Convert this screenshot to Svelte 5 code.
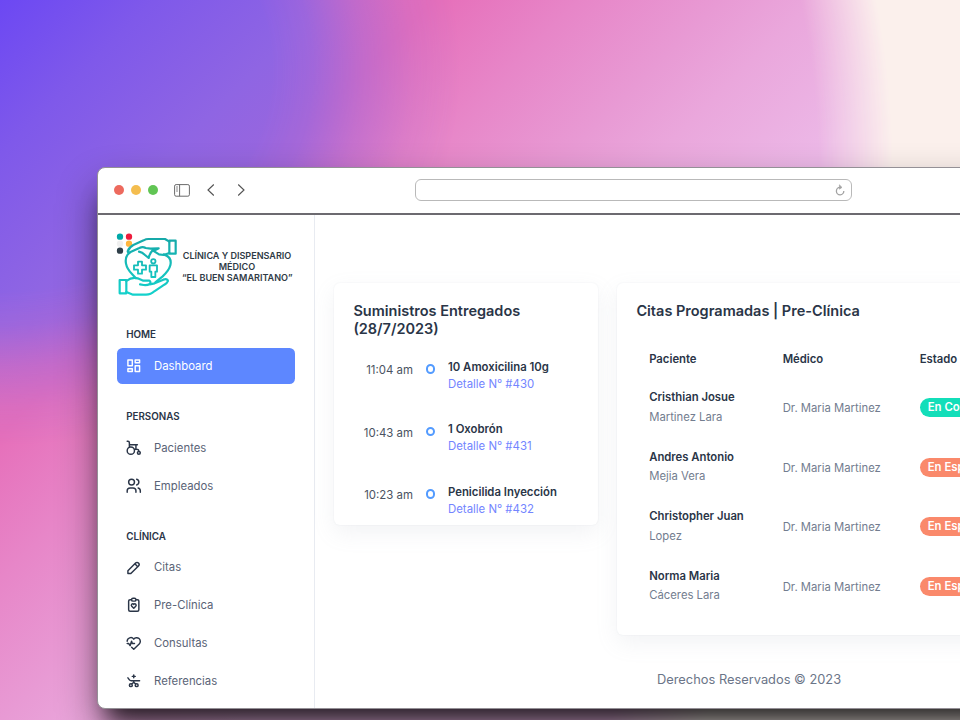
<script>
  const groups = [
    { title: 'HOME', items: [{ label: 'Dashboard', icon: 'dashboard', active: true }] },
    {
      title: 'PERSONAS',
      items: [
        { label: 'Pacientes', icon: 'wheelchair' },
        { label: 'Empleados', icon: 'users' }
      ]
    },
    {
      title: 'CLÍNICA',
      items: [
        { label: 'Citas', icon: 'pencil' },
        { label: 'Pre-Clínica', icon: 'clipboard' },
        { label: 'Consultas', icon: 'heartbeat' },
        { label: 'Referencias', icon: 'bed' }
      ]
    }
  ];

  const icons = {
    dashboard: 'M4 4h6v8h-6z M4 16h6v4h-6z M14 12h6v8h-6z M14 4h6v4h-6z',
    wheelchair:
      'M3 16a5 5 0 1 0 10 0a5 5 0 1 0 -10 0 M17 19a2 2 0 1 0 4 0a2 2 0 1 0 -4 0 M19 17a3 3 0 0 0 -3 -3h-3.4 M3 3h1a2 2 0 0 1 2 2v6 M6 8h11 M15 8v6',
    users:
      'M5 7a4 4 0 1 0 8 0a4 4 0 1 0 -8 0 M3 21v-2a4 4 0 0 1 4 -4h4a4 4 0 0 1 4 4v2 M16 3.13a4 4 0 0 1 0 7.75 M21 21v-2a4 4 0 0 0 -3 -3.85',
    pencil: 'M4 20h4l10.5 -10.5a1.5 1.5 0 0 0 -4 -4l-10.5 10.5v4 M13.5 6.5l4 4',
    clipboard:
      'M9 5h-2a2 2 0 0 0 -2 2v12a2 2 0 0 0 2 2h10a2 2 0 0 0 2 -2v-12a2 2 0 0 0 -2 -2h-2 M9 5a2 2 0 0 1 2 -2h2a2 2 0 0 1 2 2a2 2 0 0 1 -2 2h-2a2 2 0 0 1 -2 -2z M11.993 16.75l2.747 -2.815a1.9 1.9 0 0 0 0 -2.632a1.775 1.775 0 0 0 -2.56 0l-.183 .188l-.183 -.189a1.775 1.775 0 0 0 -2.56 0a1.899 1.899 0 0 0 0 2.632l2.738 2.825z',
    heartbeat:
      'M19.5 13.572l-7.5 7.428l-2.896 -2.868m-6.117 -8.104a5 5 0 0 1 9.013 -3.022a5 5 0 1 1 7.5 6.572 M3 13h2l2 3l2 -6l1 3h3',
    bed: 'M14 18a2 2 0 1 0 4 0a2 2 0 1 0 -4 0 M6 18a2 2 0 1 0 4 0a2 2 0 1 0 -4 0 M4 8l2.1 2.8a3 3 0 0 0 2.4 1.2h11.5 M10 6h4 M12 4v4 M12 12v2l-2.5 2.5 M14.5 16.5l-2.5 -2.5'
  };

  const supplies = [
    { time: '11:04 am', name: '10 Amoxicilina 10g', detail: 'Detalle N° #430' },
    { time: '10:43 am', name: '1 Oxobrón', detail: 'Detalle N° #431' },
    { time: '10:23 am', name: 'Penicilida Inyección', detail: 'Detalle N° #432' }
  ];

  const appointments = [
    { first: 'Cristhian Josue', last: 'Martinez Lara', status: 'En Consulta', tone: 'green' },
    { first: 'Andres Antonio', last: 'Mejia Vera', status: 'En Espera', tone: 'orange' },
    { first: 'Christopher Juan', last: 'Lopez', status: 'En Espera', tone: 'orange' },
    { first: 'Norma Maria', last: 'Cáceres Lara', status: 'En Espera', tone: 'orange' }
  ];
</script>

<div class="scene">
  <div class="cream"></div>
  <div class="violet"></div>
  <div class="window">
    <header class="toolbar">
      <div class="lights"><i class="red"></i><i class="yellow"></i><i class="lime"></i></div>
      <svg class="panel" viewBox="0 0 16 13" fill="none" stroke="#6b6b6b">
        <rect x=".6" y=".6" width="14.8" height="11.6" rx="1.5" />
        <path d="M5.6 .6v11.6" />
        <path d="M2 3h2M2 5h2M2 7h2" stroke-width=".8" />
      </svg>
      <svg class="back" viewBox="0 0 8 12" fill="none" stroke="#555" stroke-width="1.15"><path d="M6.8 .5L1 6l5.8 5.5" /></svg>
      <svg class="forward" viewBox="0 0 8 12" fill="none" stroke="#555" stroke-width="1.15"><path d="M1.2 .5L7 6l-5.8 5.5" /></svg>
      <div class="address">
        <svg viewBox="0 0 10 12" fill="none" stroke="#a2a2a2" stroke-width="1.3">
          <path d="M5 3.4A3.7 3.7 0 1 0 8.8 7" /><path d="M4.4 .8L7 3.4L4.4 5.2z" fill="#a2a2a2" stroke-width=".6" />
        </svg>
      </div>
    </header>

    <div class="body">
      <aside>
        <div class="brand">
          <svg viewBox="0 0 225 225" fill="none" stroke-width="6.6" stroke-linejoin="round" stroke-linecap="round">
            <defs>
              <linearGradient id="teal" x1="0" y1="38" x2="0" y2="212" gradientUnits="userSpaceOnUse">
                <stop offset="0" stop-color="#16a8a8" /><stop offset="1" stop-color="#14d2cc" />
              </linearGradient>
            </defs>
            <g stroke="none">
              <circle cx="30" cy="35" r="9.5" fill="#00a8a8" />
              <circle cx="57" cy="35" r="9.5" fill="#ee1c3c" />
              <circle cx="30" cy="56" r="9.5" fill="#efefef" />
              <circle cx="57" cy="56" r="9.5" fill="#ffb63d" />
              <circle cx="30" cy="77" r="9.5" fill="#2f3f49" />
            </g>
            <g stroke="url(#teal)">
              <path d="M178 47h19v39h-19z" />
              <path d="M178 50L165 42H115Q108 42 101 46L70 60Q57 67 53 79Q53 84 60 82L88 69Q98 64 107 69L122 71L146 70Q139 75 128 76Q119 84 116 99L105 90Q97 82 87 80" />
              <path d="M128 76L147 88L161 90L178 84" />
              <path d="M59 83Q44 94 48 116Q51 132 66 147L77 159" />
              <path d="M161 88Q187 96 181 121Q177 137 158 154L136 172" />
              <path d="M84 110h12v11h12v13h-12v12h-12v-12h-12v-13h12z" stroke-width="5.5" />
              <circle cx="130" cy="109" r="6.5" stroke-width="5.5" />
              <path d="M119 121h22v19h-5v16h-12v-16h-5z" stroke-width="5.5" />
              <path d="M29 165h20v40h-20z" />
              <path d="M49 168Q66 155 83 160L100 167H118Q124 171 119 177Q113 181 101 180L90 178M119 178L134 175L160 164Q172 160 174 168Q172 174 163 179L133 199Q123 209 108 209H69L49 201" />
            </g>
          </svg>
          <p>CLÍNICA Y DISPENSARIO<br />MÉDICO<br />“EL BUEN SAMARITANO”</p>
        </div>
        <nav>
          {#each groups as group}
            <section>
              <h6>{group.title}</h6>
              {#each group.items as item}
                <div class="item" class:active={item.active}>
                  <svg viewBox="0 0 24 24" fill="none" stroke="currentColor" stroke-width="2" stroke-linecap="round" stroke-linejoin="round">
                    <path d={icons[item.icon]} />
                  </svg>
                  <span>{item.label}</span>
                </div>
              {/each}
            </section>
          {/each}
        </nav>
      </aside>

      <main>
        <div class="cards">
          <section class="card supplies">
            <h5>Suministros Entregados<br />(28/7/2023)</h5>
            {#each supplies as s}
              <div class="event">
                <time>{s.time}</time>
                <b class="ring"></b>
                <div class="what"><strong>{s.name}</strong><span>{s.detail}</span></div>
              </div>
            {/each}
          </section>
          <section class="card visits">
            <h5>Citas Programadas | Pre-Clínica</h5>
            <div class="row head"><span>Paciente</span><span>Médico</span><span>Estado</span></div>
            {#each appointments as a}
              <div class="row">
                <div class="who"><strong>{a.first}</strong><span>{a.last}</span></div>
                <span class="doctor">Dr. Maria Martinez</span>
                <div class="state"><span class="badge {a.tone}">{a.status}</span></div>
              </div>
            {/each}
          </section>
        </div>
        <footer>Derechos Reservados © 2023</footer>
      </main>
    </div>
  </div>
</div>

<style>
  :global(body) { margin: 0; }
  .scene {
    position: relative;
    box-sizing: border-box;
    width: 960px;
    height: 720px;
    padding: 167px 0 0 97px;
    overflow: hidden;
    font-family: Inter, 'Liberation Sans', sans-serif;
    background: linear-gradient(135deg, #e56ab6 0, #e66fba 308px, #e786c8 410px, #e89ad4 510px, #eaa7dc 575px, #ecb8e7 690px);
  }
  .cream, .violet { position: absolute; inset: 0; }
  .cream {
    background: #fbf0ec;
    mask-image: radial-gradient(circle at 0 170px, transparent 818px, rgba(0, 0, 0, .5) 856px, #000 893px);
  }
  .violet {
    background: linear-gradient(135deg, #6c48f3 0, #7f59ea 110px, #8f65e3 230px, #9866de 300px, #a06ade 400px);
    mask-image: radial-gradient(ellipse 460px 375px at 0 70px, #000 59%, rgba(0, 0, 0, .85) 68%, rgba(0, 0, 0, .45) 79%, rgba(0, 0, 0, .15) 90%, transparent 100%);
  }
  .window {
    position: relative;
    box-sizing: border-box;
    flex: none;
    width: 1200px;
    height: 542px;
    border: 1px solid #949096;
    border-radius: 8px;
    background: #fff;
    overflow: hidden;
    box-shadow: 0 22px 22px -11px rgba(0, 0, 0, .72), 0 20px 42px -2px rgba(0, 0, 0, .48);
    display: flex;
    flex-direction: column;
  }
  .toolbar {
    box-sizing: border-box;
    height: 47px;
    flex: none;
    display: flex;
    align-items: center;
    padding: 0 0 1px 16px;
    border-bottom: 2px solid #6c6a70;
  }
  .lights { display: flex; gap: 6.5px; }
  .lights i { width: 10.4px; height: 10.4px; border-radius: 50%; }
  .red { background: #ed6a5e; }
  .yellow { background: #f4bd4f; }
  .lime { background: #61c554; }
  .panel { width: 16px; height: 13px; margin-left: 16px; }
  .back { width: 8px; height: 12px; margin-left: 17px; }
  .forward { width: 8px; height: 12px; margin-left: 22px; }
  .address {
    box-sizing: border-box;
    width: 437px;
    height: 22px;
    margin-left: 170px;
    border: 1.5px solid #b9b9b9;
    border-radius: 6px;
    display: flex;
    justify-content: flex-end;
    align-items: center;
    padding-right: 6px;
  }
  .address svg { width: 10px; height: 12px; }
  .body { flex: 1; min-height: 0; display: flex; }
  aside {
    box-sizing: border-box;
    width: 217px;
    flex: none;
    border-right: 1px solid #e8ebf1;
    padding: 10px 19px 0 12px;
  }
  .brand { display: flex; height: 75px; }
  .brand svg { width: 75px; height: 75px; flex: none; }
  .brand p {
    margin: 25px 0 0 -3px;
    width: 110px;
    font-size: 9.05px;
    line-height: 11.2px;
    font-weight: 600;
    color: #2f3b46;
    text-align: center;
    white-space: nowrap;
  }
  nav { padding: 20px 0 0 6.5px; }
  nav section { margin-bottom: 17.8px; }
  h6 {
    margin: 0;
    padding: 6.4px 0 4.6px 9.7px;
    height: 17px;
    font-size: 9.8px;
    line-height: 17px;
    font-weight: 600;
    color: #2a3547;
  }
  .item {
    box-sizing: border-box;
    height: 36px;
    margin-bottom: 1.8px;
    padding-left: 8px;
    display: flex;
    align-items: center;
    border-radius: 5.5px;
    color: #2a3547;
    font-size: 11.35px;
  }
  .item svg { width: 17.5px; height: 17.5px; }
  .item span { margin-left: 12px; color: #5a6376; }
  .active { background: #5d87ff; color: #fff; }
  .item.active span { color: #fff; }
  main { flex: 1; padding: 68px 0 0 19.4px; }
  .cards { display: flex; align-items: flex-start; gap: 19px; }
  .card {
    box-sizing: border-box;
    flex: none;
    border-radius: 6px;
    background: #fff;
    box-shadow: 0 8px 22px rgba(145, 158, 171, .12), 0 0 2px rgba(145, 158, 171, .14);
  }
  h5 { margin: 0; font-size: 14.5px; line-height: 17.6px; font-weight: 600; color: #2a3547; white-space: nowrap; }
  .supplies { width: 264px; height: 242px; padding: 19px 19px 0; }
  .event { display: flex; height: 62.6px; font-size: 11.4px; white-space: nowrap; }
  .supplies h5 { margin-bottom: 20.4px; }
  time { width: 59.5px; text-align: right; line-height: 16px; padding-top: 4.4px; color: #4a5362; }
  .ring { box-sizing: border-box; width: 9.6px; height: 9.6px; border: 2px solid #539bff; border-radius: 50%; margin: 6.7px 0 0 13px; }
  .what { display: flex; flex-direction: column; margin-left: 12.5px; line-height: 17px; padding-top: 1px; }
  .what strong { font-size: 11.35px; font-weight: 600; color: #2a3547; }
  .what span { color: #7385ff; }
  .visits { width: 640px; height: 352px; padding: 19px 19px 0; }
  .visits h5 { font-size: 14.5px; }
  .row {
    display: grid;
    grid-template-columns: 133.5px 137px 1fr;
    align-items: center;
    height: 59.5px;
    padding-left: 12.8px;
    font-size: 11.3px;
    white-space: nowrap;
    color: #737d8f;
  }
  .head { height: 38px; margin-top: 20px; margin-bottom: .4px; font-weight: 600; color: #2a3547; }
  .doctor { padding-top: 1px; }
  .who { display: flex; flex-direction: column; line-height: 19.4px; }
  .who strong { font-weight: 600; color: #2a3547; }
  .state { display: flex; }
  .badge { height: 19px; line-height: 19px; padding: 0 8px; border-radius: 10px; color: #fff; font-weight: 600; font-size: 11.4px; }
  .green { background: #13deb9; }
  .orange { background: #fa896b; }
  footer { margin: 35.6px 0 0 322.6px; font-size: 12.85px; line-height: 18px; color: #6b7588; white-space: nowrap; }
</style>
